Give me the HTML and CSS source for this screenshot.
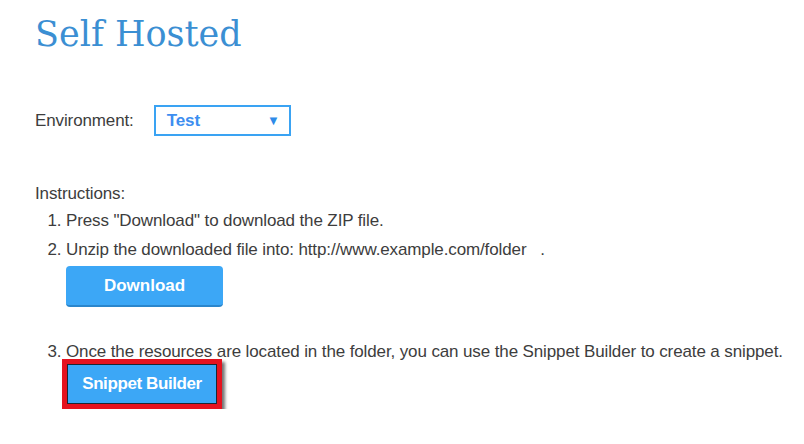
FILE: index.html
```html
<!DOCTYPE html>
<html lang="en">
<head>
    <meta charset="UTF-8">
    <meta name="viewport" content="width=device-width, initial-scale=1.0">
    <title>Self Hosted</title>
    <link rel="stylesheet" href="styles.css">
</head>
<body>

    <h1 class="title">Self Hosted</h1>

    <div class="env-row">
        <span class="env-label">Environment:</span>
        <div class="select">
            <span class="select-value">Test</span>
            <span class="select-arrow">&#9660;</span>
        </div>
    </div>

    <p class="instr-head">Instructions:</p>
    <ol class="steps">
        <li>Press "Download" to download the ZIP file.</li>
        <li>Unzip the downloaded file into: http://www.example.com/folder &nbsp; .
            <div class="btn-wrap">
                <button class="btn" type="button">Download</button>
            </div>
        </li>
        <li>Once the resources are located in the folder, you can use the Snippet Builder to create a snippet.
            <div class="snippet-wrap">
                <button class="btn btn-snippet" type="button">Snippet Builder</button>
            </div>
        </li>
    </ol>

</body>
</html>
```

FILE: styles.css
```css
body {
    font-family: "Liberation Sans", Arial, sans-serif;
    font-size: 17px;
    letter-spacing: -0.12px;
    color: #3d3d3d;
    background-color: #ffffff;
    margin: 0;
    padding: 0 0 0 35px;
}

.title {
    font-family: "DejaVu Serif", serif;
    font-weight: normal;
    font-size: 35px;
    line-height: 44px;
    letter-spacing: 0;
    color: #3b8fd3;
    margin: 12px 0 0 0;
}

.env-row {
    display: flex;
    align-items: center;
    height: 31px;
    margin-top: 49px;
}

.select {
    display: flex;
    align-items: center;
    justify-content: space-between;
    box-sizing: border-box;
    width: 137px;
    height: 31px;
    margin-left: 20px;
    padding: 0 9px 0 11px;
    border: 2px solid #3aa3f3;
    color: #3d8ef0;
    font-weight: bold;
}

.select-arrow {
    font-size: 13px;
    color: #2f8be8;
}

.instr-head {
    margin: 46px 0 0 0;
    line-height: 24px;
}

.steps {
    margin: 0;
    padding-left: 31px;
    line-height: 29px;
}

.btn-wrap {
    padding: 2px 0 30px 0;
}

.btn {
    font-family: "Liberation Sans", Arial, sans-serif;
    font-size: 17px;
    font-weight: bold;
    color: #ffffff;
    background-color: #3ca7f6;
    border: none;
    border-bottom: 2px solid #2b86cc;
    border-radius: 4px;
    width: 157px;
    height: 41px;
    padding: 0;
    cursor: pointer;
}

.snippet-wrap {
    margin: -7px 0 0 -4px;
}

.btn-snippet {
    width: 160px;
    height: 50px;
    border-radius: 0;
    border: 5px solid #e5121f;
    box-shadow: inset 0 0 0 1px #1c2633, 3px 3px 3px rgba(0, 0, 0, 0.55);
    letter-spacing: -0.4px;
}
```
